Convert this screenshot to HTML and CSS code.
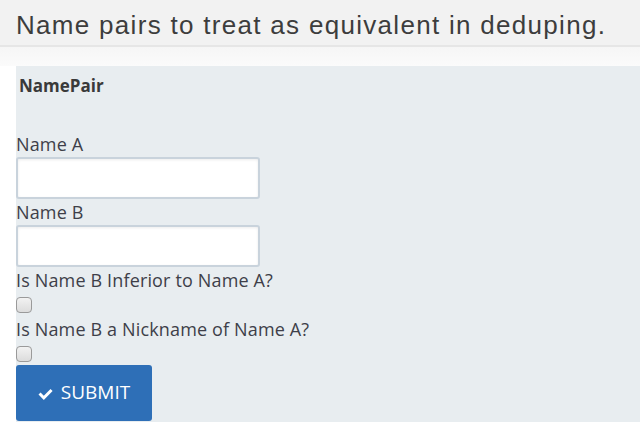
FILE: index.html
```html
<!DOCTYPE html>
<html>
<head>
<meta charset="utf-8">
<link rel="stylesheet" href="styles.css">
</head>
<body>
<header class="top">
  <h1 class="title">Name pairs to treat as equivalent in deduping.</h1>
</header>
<div class="gap"></div>
<form class="panel">
  <h3 class="panel-title">NamePair</h3>
  <label class="field-label" for="a">Name A</label>
  <input class="text-input" id="a" type="text">
  <label class="field-label" for="b">Name B</label>
  <input class="text-input" id="b" type="text">
  <label class="field-label" for="c">Is Name B Inferior to Name A?</label>
  <input class="check" id="c" type="checkbox">
  <label class="field-label" for="d">Is Name B a Nickname of Name A?</label>
  <input class="check" id="d" type="checkbox">
  <button class="submit" type="button">
    <svg class="check-icon" viewBox="0 0 16 11" width="16" height="11"><path d="M0.5 5.6 L2.6 3.5 L5.8 6.7 L12.5 0 L14.6 2.1 L5.8 10.9 Z" fill="#fff"/></svg>
    <span>SUBMIT</span>
  </button>
</form>
</body>
</html>
```
FILE: styles.css
```css
html, body {
  margin: 0;
  padding: 0;
  background: #fff;
}
body {
  font-family: "Open Sans", "Liberation Sans", sans-serif;
  color: #3e3f49;
}
.top {
  box-sizing: border-box;
  height: 47px;
  padding: 7px 0 0 16px;
  background: #f2f2f2;
  border-bottom: 2px solid #e6e6e6;
}
.title {
  margin: 0;
  font-family: "Liberation Sans", Arial, sans-serif;
  font-weight: normal;
  font-size: 26px;
  letter-spacing: 1.3px;
  line-height: 36px;
  color: #3d3d3d;
  white-space: nowrap;
}
.gap {
  height: 19px;
  background: linear-gradient(#f6f6f6, #fbfbfb);
}
.panel {
  margin: 0 0 0 16px;
  background: #e8edf0;
  display: flex;
  flex-direction: column;
  align-items: flex-start;
  height: 356px;
}
.panel-title {
  margin: 0 0 33px;
  padding: 7px 3px 0;
  font-size: 17px;
  line-height: 25px;
  font-weight: bold;
  color: #3a3a3a;
}
.field-label {
  display: block;
  font-size: 18px;
  letter-spacing: 0.15px;
  line-height: 26px;
  color: #3e3f49;
  white-space: nowrap;
}
.text-input {
  box-sizing: border-box;
  width: 244px;
  height: 42px;
  margin: 0;
  border: 2px solid #c9d3dc;
  border-radius: 3px;
  background: #fff;
  box-shadow: inset 0 1px 3px rgba(0,0,0,0.08);
  font: inherit;
}
.check {
  appearance: none;
  -webkit-appearance: none;
  box-sizing: border-box;
  width: 16px;
  height: 16px;
  margin: 4px 0 3px;
  border: 1px solid #9a9a9a;
  border-radius: 4px;
  background: linear-gradient(#f2f2f2, #dcdcdc);
}
.submit {
  box-sizing: border-box;
  width: 136px;
  height: 56px;
  margin: 0;
  border: none;
  border-radius: 3px;
  background: #2e6fb7;
  color: #fff;
  font-family: "Open Sans", "Liberation Sans", sans-serif;
  font-size: 19px;
  display: flex;
  align-items: center;
  justify-content: center;
  gap: 7px;
  padding: 0 0 2px;
}
.check-icon {
  display: block;
  margin-top: 5px;
}
```
